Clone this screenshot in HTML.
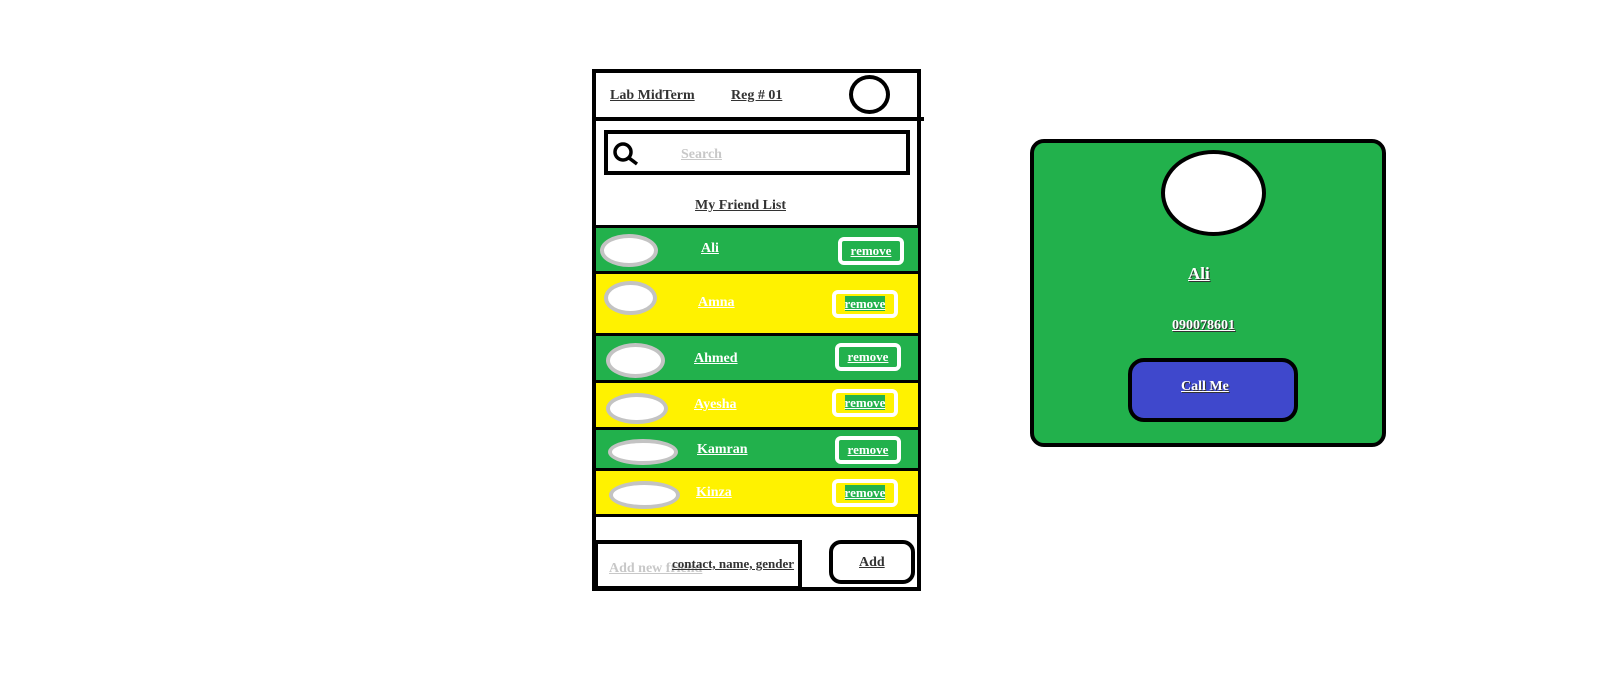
<!DOCTYPE html>
<html><head><meta charset="utf-8"><style>
body{margin:0;width:1600px;height:686px;background:#fff;position:relative;overflow:hidden;font-family:"Liberation Serif",serif;font-weight:bold;}
.a{position:absolute;box-sizing:border-box;}
.t{position:absolute;font-size:14px;text-decoration:underline;white-space:nowrap;}
.g{background:#22b14c;}
.y{background:#fff200;}
.ov{position:absolute;box-sizing:border-box;border:4px solid #c3c3c3;background:#fff;border-radius:50%;}
.rm{position:absolute;box-sizing:border-box;border:4px solid #fff;border-radius:6px;font-size:13px;text-decoration:underline;text-align:center;}
.rg{color:#fff;}
.ry{color:#fff;}
.ry span{background:#22b14c;color:#fff;}
</style></head><body>
<div class="a" style="left:592px;top:69px;width:329px;height:522px;border:4px solid #000;"></div>
<div class="a" style="left:592px;top:117px;width:332px;height:4px;background:#000;"></div>
<div class="t" style="left:610px;top:88px;color:#333;">Lab MidTerm</div>
<div class="t" style="left:731px;top:88px;color:#333;">Reg # 01</div>
<div class="a" style="left:849px;top:75px;width:41px;height:39px;border:4px solid #000;border-radius:50%;"></div>
<div class="a" style="left:604px;top:130px;width:306px;height:45px;border:4px solid #000;"></div>
<svg class="a" style="left:610px;top:140px" width="40" height="28"><circle cx="13" cy="12" r="8" fill="none" stroke="#000" stroke-width="3.5"/><line x1="19" y1="18" x2="27" y2="24" stroke="#000" stroke-width="3.5"/></svg>
<div class="t" style="left:681px;top:147px;color:#c8c8c8;">Search</div>
<div class="t" style="left:695px;top:198px;color:#333;">My Friend List</div>
<div class="a" style="left:592px;top:225px;width:329px;height:3px;background:#000"></div>
<div class="a g" style="left:596px;top:228px;width:322px;height:43px;"></div>
<div class="a" style="left:592px;top:271px;width:329px;height:3px;background:#000"></div>
<div class="a y" style="left:596px;top:274px;width:322px;height:59px;"></div>
<div class="a" style="left:592px;top:333px;width:329px;height:3px;background:#000"></div>
<div class="a g" style="left:596px;top:336px;width:322px;height:44px;"></div>
<div class="a" style="left:592px;top:380px;width:329px;height:3px;background:#000"></div>
<div class="a y" style="left:596px;top:383px;width:322px;height:44px;"></div>
<div class="a" style="left:592px;top:427px;width:329px;height:3px;background:#000"></div>
<div class="a g" style="left:596px;top:430px;width:322px;height:38px;"></div>
<div class="a" style="left:592px;top:468px;width:329px;height:3px;background:#000"></div>
<div class="a y" style="left:596px;top:471px;width:322px;height:43px;"></div>
<div class="a" style="left:592px;top:514px;width:329px;height:3px;background:#000"></div>

<div class="ov" style="left:600px;top:234px;width:58px;height:33px;"></div>
<div class="t" style="left:701px;top:241px;color:#fff;">Ali</div>
<div class="rm rg" style="left:838px;top:237px;width:66px;height:28px;line-height:20px;">remove</div>

<div class="ov" style="left:604px;top:281px;width:53px;height:34px;"></div>
<div class="t" style="left:698px;top:295px;color:#fff;">Amna</div>
<div class="rm ry" style="left:832px;top:290px;width:66px;height:28px;line-height:20px;"><span>remove</span></div>

<div class="ov" style="left:606px;top:343px;width:59px;height:35px;"></div>
<div class="t" style="left:694px;top:351px;color:#fff;">Ahmed</div>
<div class="rm rg" style="left:835px;top:343px;width:66px;height:28px;line-height:20px;">remove</div>

<div class="ov" style="left:606px;top:393px;width:62px;height:31px;"></div>
<div class="t" style="left:694px;top:397px;color:#fff;">Ayesha</div>
<div class="rm ry" style="left:832px;top:389px;width:66px;height:28px;line-height:20px;"><span>remove</span></div>

<div class="ov" style="left:608px;top:439px;width:70px;height:26px;"></div>
<div class="t" style="left:697px;top:442px;color:#fff;">Kamran</div>
<div class="rm rg" style="left:835px;top:436px;width:66px;height:28px;line-height:20px;">remove</div>

<div class="ov" style="left:609px;top:481px;width:71px;height:28px;"></div>
<div class="t" style="left:696px;top:485px;color:#fff;">Kinza</div>
<div class="rm ry" style="left:832px;top:479px;width:66px;height:28px;line-height:20px;"><span>remove</span></div>

<div class="a" style="left:594px;top:540px;width:208px;height:50px;border:4px solid #000;background:#fff;"></div>
<div class="t" style="left:609px;top:561px;color:#c8c8c8;">Add new friend</div>
<div class="t" style="left:672px;top:556px;color:#333;font-size:13px;">contact, name, gender</div>
<div class="a" style="left:829px;top:540px;width:86px;height:44px;border:4px solid #000;border-radius:12px;"></div>
<div class="t" style="left:859px;top:555px;color:#333;">Add</div>

<div class="a g" style="left:1030px;top:139px;width:356px;height:308px;border:4px solid #000;border-radius:14px;"></div>
<div class="a" style="left:1161px;top:150px;width:105px;height:86px;border:4px solid #000;border-radius:50%;background:#fff;"></div>
<div class="t" style="left:1188px;top:264px;color:#fff;font-size:17px;text-shadow:1px 1px 0 #333;">Ali</div>
<div class="t" style="left:1172px;top:318px;color:#fff;font-size:14px;text-shadow:1px 1px 0 #333;">0900786​01</div>
<div class="a" style="left:1128px;top:358px;width:170px;height:64px;border:4px solid #000;border-radius:16px;background:#3f48cc;"></div>
<div class="t" style="left:1181px;top:379px;color:#fff;font-size:14px;text-shadow:1px 1px 0 #333;">Call Me</div>
</body></html>
